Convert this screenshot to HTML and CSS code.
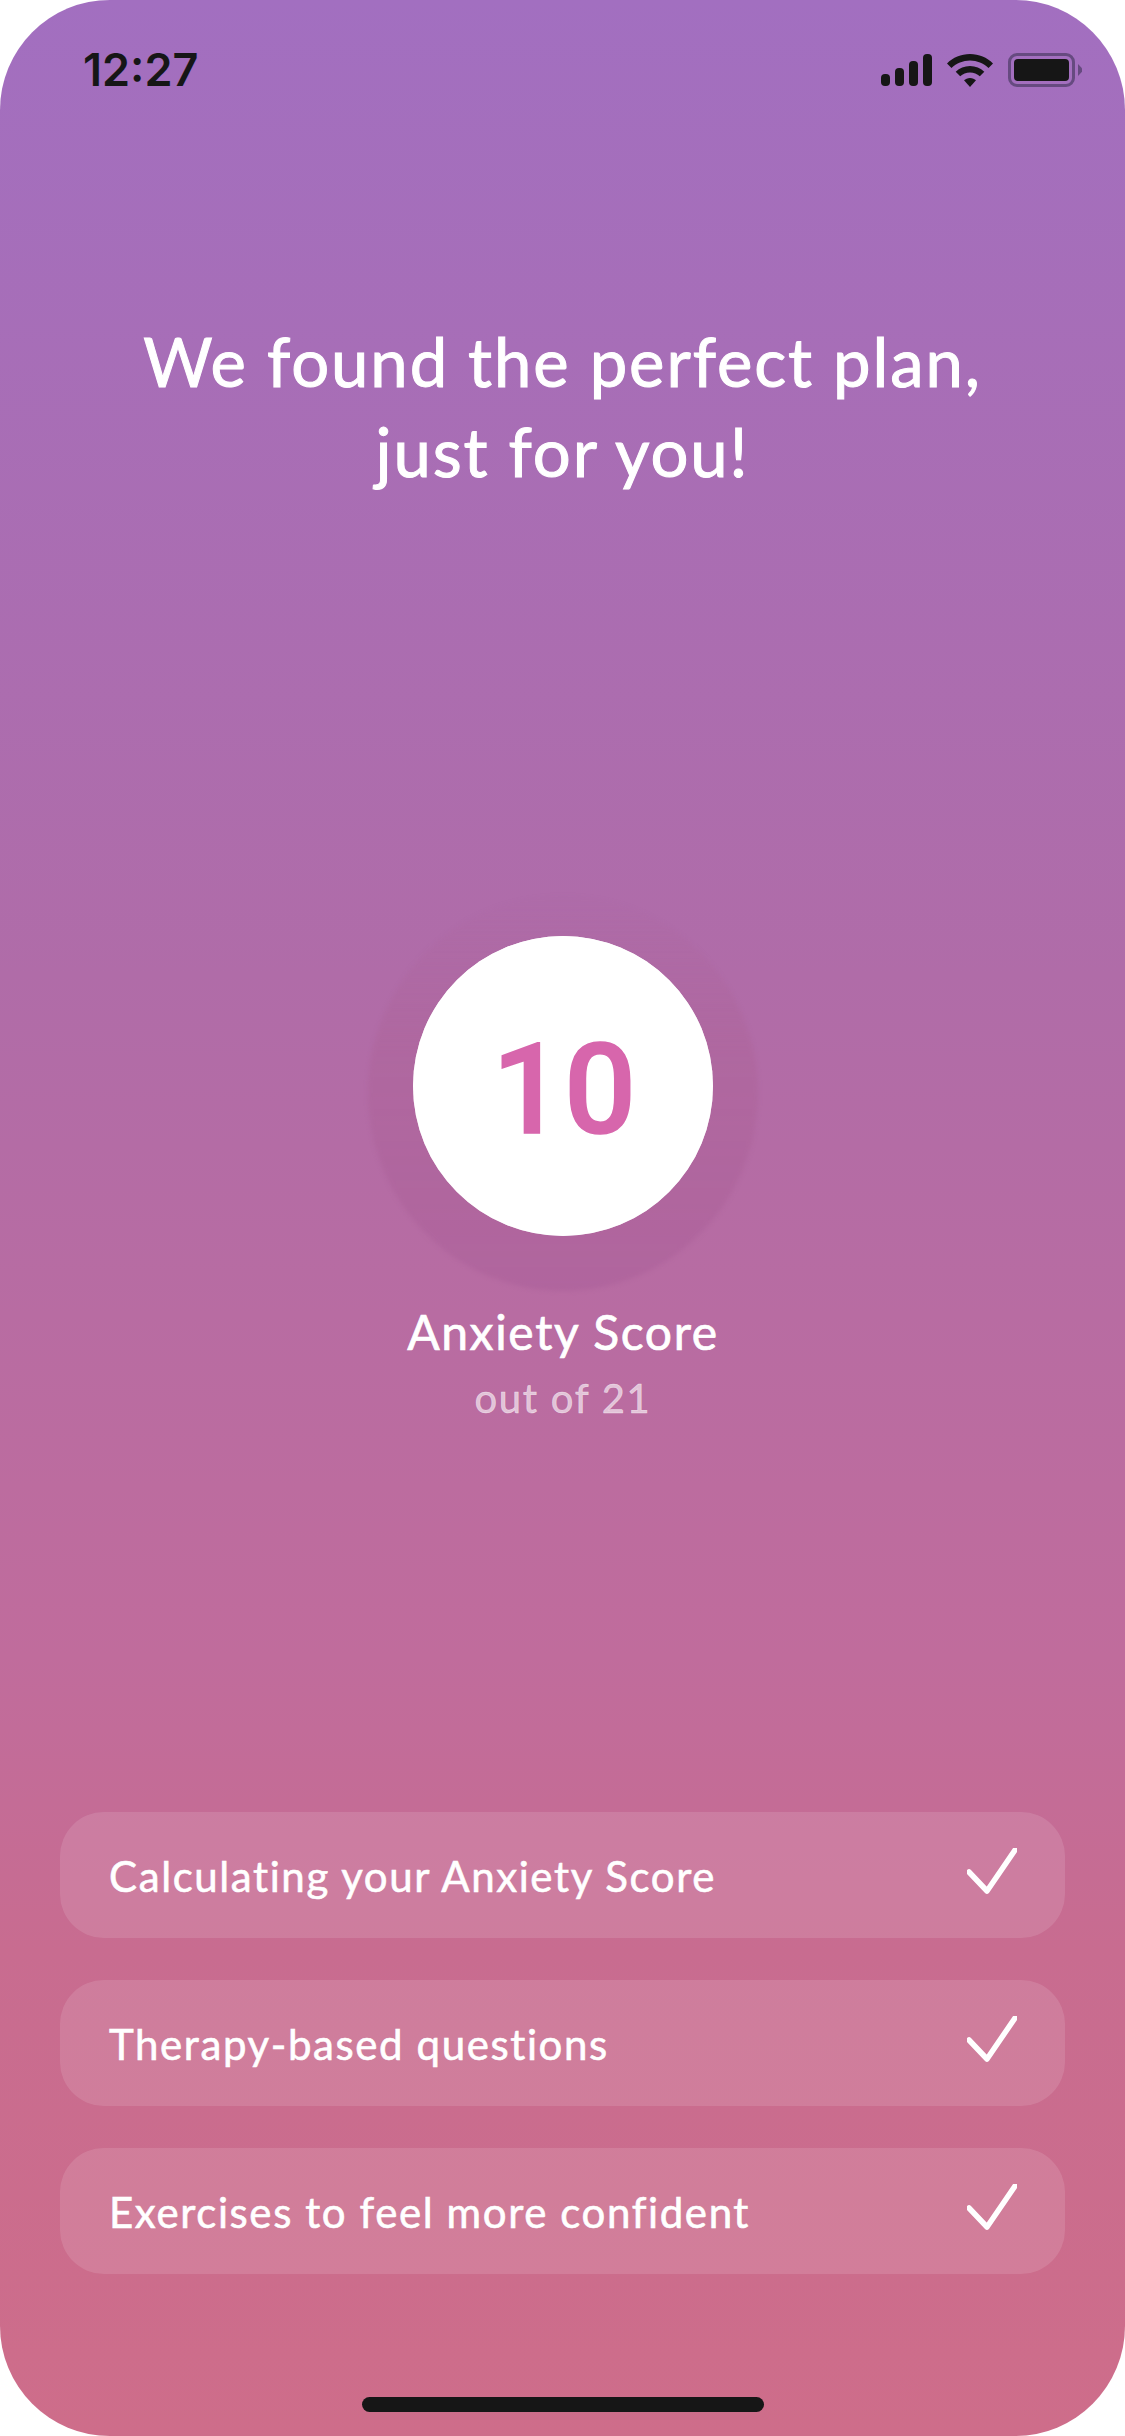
FILE: index.html
```html
<!DOCTYPE html>
<html lang="en">
<head>
<meta charset="utf-8">
<title>Your plan</title>
<link rel="stylesheet" href="styles.css">
</head>
<body>
<main class="screen">
  <header class="status">
    <span class="time">12:27</span>
    <div class="status-icons">
      <svg class="signal" width="51" height="32" viewBox="0 0 51 32"><rect x="0" y="20" width="9" height="12" rx="4" /><rect x="14" y="14" width="9" height="18" rx="4"/><rect x="28" y="7" width="9" height="25" rx="4"/><rect x="42" y="0" width="9" height="32" rx="4"/></svg>
      <svg class="wifi" width="46" height="33" viewBox="0 0 46 33"><path d="M23 0C32 0 40 3.500 46 9.500L41.500 14C36.500 9.300 30 6.500 23 6.500S9.500 9.300 4.500 14L0 9.500C6 3.500 14 0 23 0Z"/><path d="M23 12C28.500 12 33.500 14.200 37.300 17.800L32.800 22.300C30.200 19.900 26.800 18.500 23 18.500S15.800 19.900 13.200 22.300L8.700 17.800C12.500 14.200 17.500 12 23 12Z"/><path d="M23 24C25.500 24 27.500 25 29 26.300L23 33L17 26.300C18.500 25 20.500 24 23 24Z"/></svg>
      <div class="battery"><div class="battery-body"><div class="battery-fill"></div></div><div class="battery-nub"></div></div>
    </div>
  </header>

  <h1 class="title">We found the perfect plan,<br>just for you!</h1>

  <section class="score">
    <div class="score-circle">10</div>
    <p class="score-label">Anxiety Score</p>
    <p class="score-sub">out of 21</p>
  </section>

  <ul class="checks">
    <li class="check-row"><span>Calculating your Anxiety Score</span><svg class="tick" width="50" height="46" viewBox="0 0 50 46"><path d="M2 24L20 43L48 2"/></svg></li>
    <li class="check-row"><span>Therapy-based questions</span><svg class="tick" width="50" height="46" viewBox="0 0 50 46"><path d="M2 24L20 43L48 2"/></svg></li>
    <li class="check-row"><span>Exercises to feel more confident</span><svg class="tick" width="50" height="46" viewBox="0 0 50 46"><path d="M2 24L20 43L48 2"/></svg></li>
  </ul>

  <div class="home-bar"></div>
</main>
</body>
</html>
```

FILE: styles.css
```css
* { box-sizing: border-box; margin: 0; padding: 0; }
html, body { width: 1125px; height: 2436px; background: #fff; overflow: hidden; }
.screen {
  width: 1125px;
  height: 2436px;
  border-radius: 110px;
  background: linear-gradient(180deg, #a26fc0 0%, #b06ca8 40%, #c06c9c 68%, #c86c90 80%, #ce6d8a 100%);
  display: flex;
  flex-direction: column;
  align-items: center;
  font-family: "Lato", sans-serif;
  color: #fff;
  overflow: hidden;
}
.status {
  width: 100%;
  height: 52px;
  margin-top: 44px;
  padding: 0 43px 0 83px;
  display: flex;
  justify-content: space-between;
  align-items: center;
  color: #161616;
}
.time {
  font-family: "Inter", sans-serif;
  font-weight: 600;
  font-size: 45px;
  letter-spacing: 0;
  line-height: 52px;
}
.status-icons { display: flex; align-items: center; gap: 15px; }
.status-icons svg { fill: #161616; display: block; }
.battery { display: flex; align-items: center; gap: 3px; }
.battery-body {
  width: 67px;
  height: 34px;
  border: 3px solid #664a80;
  border-radius: 9px;
  padding: 3px;
}
.battery-fill { width: 100%; height: 100%; background: #161616; border-radius: 4px; }
.battery-nub {
  width: 4px;
  height: 12px;
  background: #664a80;
  clip-path: polygon(0 0, 100% 35%, 100% 65%, 0 100%);
}
.title {
  margin-top: 220px;
  font-size: 67px;
  font-weight: 400;
  -webkit-text-stroke: 1px #fff;
  line-height: 90px;
  text-align: center;
  letter-spacing: 1.9px;
}
.score {
  margin-top: 440px;
  margin-left: 1px;
  display: flex;
  flex-direction: column;
  align-items: center;
}
.score-circle {
  position: relative;
  isolation: isolate;
  width: 300px;
  height: 300px;
  padding: 7px 0 0 2px;
  border-radius: 50%;
  background: #fff;
  color: #d766ac;
  display: flex;
  align-items: center;
  justify-content: center;
  font-family: "Roboto", sans-serif;
  font-weight: 500;
  font-size: 127px;
  -webkit-text-stroke: 1.5px #d766ac;
  letter-spacing: 0;
}
.score-circle::before {
  content: "";
  position: absolute;
  left: -45px;
  top: -41px;
  width: 390px;
  height: 396px;
  border-radius: 50%;
  background: linear-gradient(180deg, rgba(170, 95, 145, 0.02) 0%, rgba(170, 95, 145, 0.3) 40%, rgba(165, 90, 150, 0.36) 100%);
  filter: blur(2px);
  z-index: -2;
}
.score-circle::after {
  content: "";
  position: absolute;
  inset: 0;
  border-radius: 50%;
  background: #fff;
  z-index: -1;
}
.score-label {
  margin-top: 67px;
  font-size: 48px;
  -webkit-text-stroke: 0.7px #fff;
  line-height: 58px;
  letter-spacing: 1.65px;
}
.score-sub {
  margin-top: 12px;
  font-size: 40px;
  -webkit-text-stroke: 0.5px rgba(255, 255, 255, 0.6);
  line-height: 50px;
  letter-spacing: 1.7px;
  color: rgba(255, 255, 255, 0.6);
}
.checks {
  list-style: none;
  margin-top: 389px;
  width: 1005px;
  display: flex;
  flex-direction: column;
  gap: 42px;
}
.check-row {
  height: 126px;
  border-radius: 44px;
  background: rgba(255, 255, 255, 0.12);
  padding: 2px 48px 0 49px;
  display: flex;
  align-items: center;
  justify-content: space-between;
  font-size: 42px;
  -webkit-text-stroke: 0.6px #fff;
  letter-spacing: 1.6px;
}
.tick { fill: none; stroke: #fff; stroke-width: 5.5; stroke-linecap: round; stroke-linejoin: round; display: block; margin-bottom: 10px; }
.home-bar {
  margin-top: 123px;
  width: 402px;
  height: 15px;
  border-radius: 8px;
  background: #161616;
}
```
